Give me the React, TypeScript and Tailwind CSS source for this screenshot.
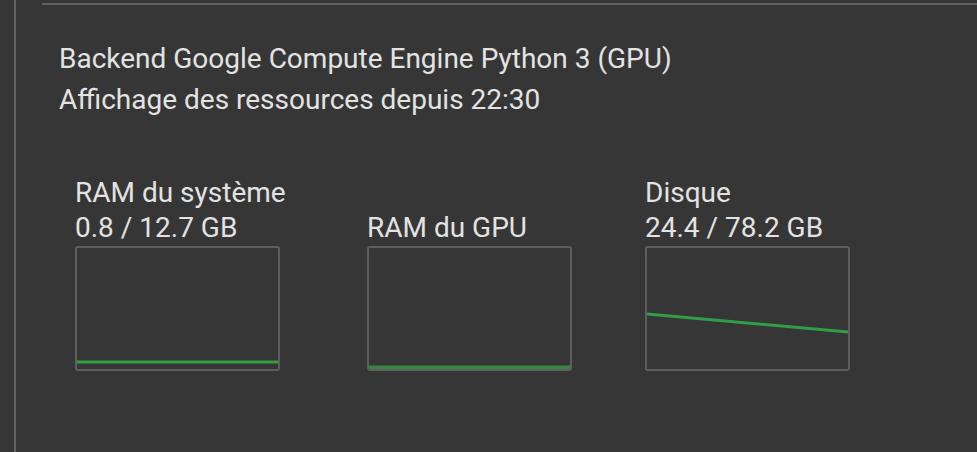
import React from 'react';

type Chart = {
  title?: string;
  usage: string;
  width: string;
  line: React.ReactNode;
};

const CHARTS: Chart[] = [
  {
    title: 'RAM du système',
    usage: '0.8 / 12.7 GB',
    width: 'w-[292px]',
    line: <line x1="0" y1="114" x2="203" y2="114" stroke="#2f9e47" strokeWidth="3" />,
  },
  {
    usage: 'RAM du GPU',
    width: 'w-[278px]',
    line: <line x1="0" y1="119.5" x2="203" y2="119.5" stroke="#37863f" strokeWidth="4" />,
  },
  {
    title: 'Disque',
    usage: '24.4 / 78.2 GB',
    width: 'w-[240px]',
    line: <line x1="0" y1="66" x2="203" y2="84" stroke="#2f9e47" strokeWidth="3" />,
  },
];

const App: React.FC = () => {
  return (
    <div
      className="flex h-[452px] w-full overflow-hidden bg-[#363636] text-[#e3e3e3]"
      style={{ fontFamily: 'Roboto, "Noto Sans", sans-serif' }}
    >
      <div className="w-[14px] shrink-0" />
      <div className="flex-1 border-l-2 border-[#626262] pl-[26px]">
        <div className="mt-[3px] border-t-2 border-[#626262] pl-[17px] pt-[33px]">
          <p className="text-[28px] leading-[41px]">Backend Google Compute Engine Python 3 (GPU)</p>
          <p className="text-[28px] leading-[41px]">Affichage des ressources depuis 22:30</p>

          <div className="mt-[55px] flex items-end pl-[16px]">
            {CHARTS.map((chart) => (
              <div key={chart.usage} className={`${chart.width} shrink-0`}>
                {chart.title && <div className="text-[28px] leading-[35px]">{chart.title}</div>}
                <div className="text-[28px] leading-[35px]">{chart.usage}</div>
                <div className="mt-px h-[125px] w-[205px] overflow-hidden rounded-[3px] border-2 border-[#5e5e5e]">
                  <svg width="201" height="121" viewBox="0 0 203 121" preserveAspectRatio="none">
                    {chart.line}
                  </svg>
                </div>
              </div>
            ))}
          </div>
        </div>
      </div>
    </div>
  );
};

export default App;
